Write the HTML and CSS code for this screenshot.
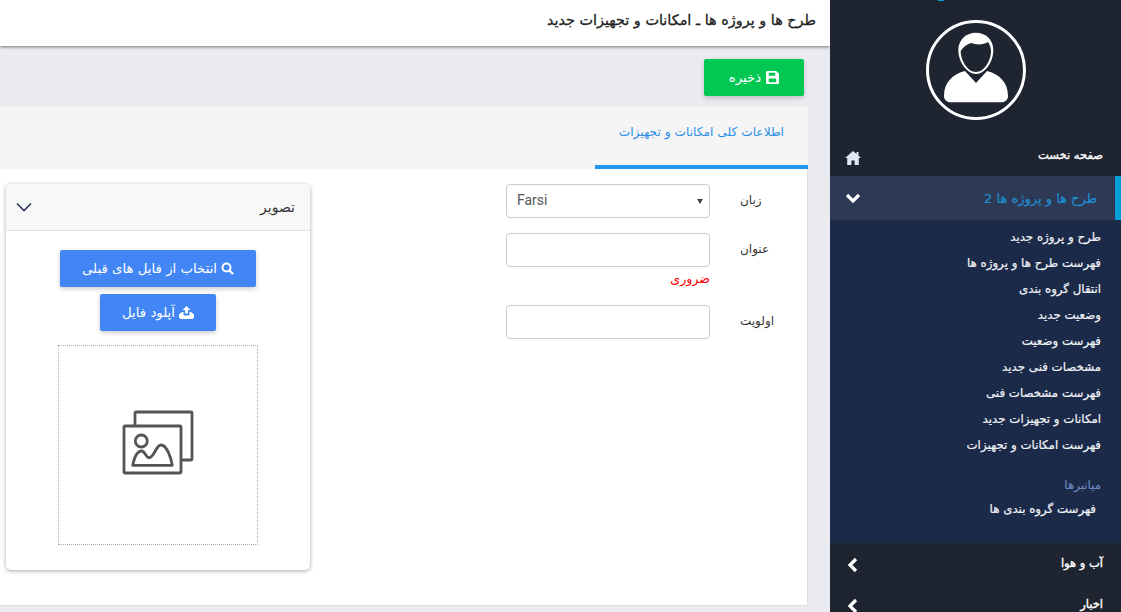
FILE: index.html
```html
<!DOCTYPE html>
<html lang="fa" dir="rtl">
<head>
    <meta charset="UTF-8">
    <meta name="viewport" content="width=device-width, initial-scale=1.0">
    <title>امکانات و تجهیزات جدید</title>
    <link rel="stylesheet" href="styles.css">
</head>
<body>
    <aside class="sidebar">
        <i class="logo-tip"></i>
        <div class="avatar">
            <svg width="104" height="104" viewBox="0 0 104 104">
                <circle cx="52" cy="52" r="48.500" fill="none" stroke="#fff" stroke-width="3"/>
                <path d="M41 53L52 65L63 53C75 56 84 64 84 78C84 82 81 84.300 77 84.300H27C23 84.300 20 82 20 78C20 64 29 56 41 53z" fill="#fff"/>
                <path d="M52 14.700C61 14.700 69.300 21 69.300 32C69.300 44 61 56 52 56C43 56 34.300 44 34.300 32C34.300 21 43 14.700 52 14.700z" fill="#fff"/>
                <path d="M36.700 33C39 29 43 26.500 47 25C52 27 60 27 64 24C66 27 67 30 67 33C67 43 60 54 52 54C44 54 36.700 43 36.700 33z" fill="#1e2430"/>
            </svg>
        </div>
        <nav class="menu">
            <a class="menu-item menu-home">
                <span>صفحه نخست</span>
                <svg class="menu-icon" width="16" height="14" viewBox="0 0 16 14"><path d="M8 0L0 7h2.200v7h4.200V9.500h3.200V14h4.200V7H16l-2.500-2.200V1h-2v2L8 0z" fill="#dfe8f5"/></svg>
            </a>
            <a class="menu-item menu-open">
                <span>طرح ها و پروژه ها 2</span>
                <svg class="menu-icon" width="16" height="12" viewBox="0 0 16 12"><path d="M2 3l6 6 6-6" fill="none" stroke="#fff" stroke-width="3.200"/></svg>
            </a>
            <div class="submenu">
                <a>طرح و پروژه جدید</a>
                <a>فهرست طرح ها و پروژه ها</a>
                <a>انتقال گروه بندی</a>
                <a>وضعیت جدید</a>
                <a>فهرست وضعیت</a>
                <a>مشخصات فنی جدید</a>
                <a>فهرست مشخصات فنی</a>
                <a>امکانات و تجهیزات جدید</a>
                <a>فهرست امکانات و تجهیزات</a>
                <div class="submenu-title">میانبرها</div>
                <a class="shortcut">فهرست گروه بندی ها</a>
            </div>
            <a class="menu-item">
                <span>آب و هوا</span>
                <svg class="menu-icon menu-arrow" width="12" height="16" viewBox="0 0 12 16"><path d="M9 2L3 8l6 6" fill="none" stroke="#fff" stroke-width="3.200"/></svg>
            </a>
            <a class="menu-item">
                <span>اخبار</span>
                <svg class="menu-icon menu-arrow" width="12" height="16" viewBox="0 0 12 16"><path d="M9 2L3 8l6 6" fill="none" stroke="#fff" stroke-width="3.200"/></svg>
            </a>
        </nav>
    </aside>

    <main class="content">
        <header class="topbar">
            <h1>طرح ها و پروژه ها ـ امکانات و تجهیزات جدید</h1>
        </header>

        <div class="toolbar">
            <button type="button" class="btn btn-save">
                <svg width="13" height="13" viewBox="0 0 14 14"><path d="M1 0h10l3 3v10a1 1 0 0 1-1 1H1a1 1 0 0 1-1-1V1a1 1 0 0 1 1-1zm2 2v3h7V2H3zm0 6v4h8V8H3z" fill="#fff" fill-rule="evenodd"/></svg>
                ذخیره
            </button>
        </div>

        <section class="panel">
            <div class="tabs">
                <a class="tab">اطلاعات کلی امکانات و تجهیزات</a>
            </div>
            <div class="panel-body">
                <form class="fields">
                    <div class="field">
                        <label>زبان</label>
                        <div class="control">
                            <div class="select">
                                <span>Farsi</span>
                                <i class="select-arrow"></i>
                            </div>
                        </div>
                    </div>
                    <div class="field">
                        <label>عنوان</label>
                        <div class="control">
                            <input type="text">
                            <div class="error">ضروری</div>
                        </div>
                    </div>
                    <div class="field">
                        <label>اولویت</label>
                        <div class="control">
                            <input type="text">
                        </div>
                    </div>
                </form>

                <div class="card">
                    <div class="card-head">
                        <span>تصویر</span>
                        <svg width="16" height="10" viewBox="0 0 16 10"><path d="M1 1.500l7 7 7-7" fill="none" stroke="#2c3a5a" stroke-width="1.600"/></svg>
                    </div>
                    <div class="card-body">
                        <button type="button" class="btn btn-blue">
                            <svg width="13" height="13" viewBox="0 0 13 13"><circle cx="5.500" cy="5.500" r="4" fill="none" stroke="#fff" stroke-width="2"/><path d="M8.500 8.500L12 12" stroke="#fff" stroke-width="2.400"/></svg>
                            انتخاب از فایل های قبلی
                        </button>
                        <button type="button" class="btn btn-blue">
                            <svg width="15" height="13" viewBox="0 0 15 13"><path d="M7.500 0L11.500 4H9v3.500H6V4H3.500z" fill="#fff"/><path d="M0 8.500L3 6h1.500v2.500a1 1 0 0 0 1 1h4a1 1 0 0 0 1-1V6H12l3 2.500V11c0 1-1 2-2 2H2c-1 0-2-1-2-2z" fill="#fff"/></svg>
                            آپلود فایل
                        </button>
                        <div class="preview">
                            <svg class="preview-icon" width="72" height="66" viewBox="0 0 72 66">
                                <g fill="none" stroke="#555" stroke-width="2.800" stroke-linejoin="round">
                                    <path d="M13 16V3a1 1 0 0 1 1-1h55a1 1 0 0 1 1 1V49a1 1 0 0 1-1 1H59"/>
                                    <rect x="2" y="16" width="57" height="47" rx="1"/>
                                    <circle cx="19.300" cy="31" r="6"/>
                                    <path d="M10.700 55.300C12 49 15 41 19.600 41C23 41 24 47.700 27.300 47.700C32 47.700 34 35 39 35C45 35 49 48 50.300 55.300z"/>
                                </g>
                            </svg>
                        </div>
                    </div>
                </div>
            </div>
        </section>
    </main>
</body>
</html>
```

FILE: styles.css
```css
html, body {
    height: 100%;
}
body {
    margin: 0;
    display: flex;
    height: 612px;
    overflow: hidden;
    font-family: "DejaVu Sans", sans-serif;
    font-size: 12px;
    color: #333;
    background-color: #e9ebf0;
}
a {
    display: block;
}

/* sidebar */
.sidebar {
    flex: 0 0 291px;
    background-color: #1e2430;
    color: white;
    position: relative;
    z-index: 2;
}
.logo-tip {
    position: absolute;
    top: 0;
    left: 108px;
    width: 6px;
    height: 1px;
    background-color: #009fd8;
}
.avatar {
    display: flex;
    justify-content: center;
    padding-top: 18px;
    height: 122px;
}
.menu-item {
    display: flex;
    justify-content: space-between;
    padding: 0 18px 0 0;
    height: 41px;
    font-size: 11.5px;
    -webkit-text-stroke: 0.35px;
}
.menu-item span {
    margin-top: 10px;
}
.menu-icon {
    margin: 11px 0 0 15px;
}
.menu-arrow {
    margin-left: 17px;
}
.menu-home {
    height: 36px;
}
.menu-home span {
    margin-top: 8px;
}
.menu-open {
    height: 44px;
    background-color: #2e3a55;
    border-right: 6px solid #009fd8;
    padding-right: 18px;
    color: #1f8fd2;
    font-size: 13px;
    -webkit-text-stroke: 0.15px;
    align-items: center;
}
.menu-open span, .menu-open .menu-icon {
    margin-top: 0;
}
.submenu {
    background-color: #1c2a4a;
    height: 323px;
    padding: 5px 20px 0 0;
    box-sizing: border-box;
    margin-bottom: 3px;
    font-size: 11.8px;
    color: #f1f3f7;
    -webkit-text-stroke: 0.2px #f1f3f7;
}
.submenu a {
    height: 26px;
    line-height: 24px;
}
.submenu-title {
    color: #6f8fc0;
    -webkit-text-stroke: 0;
    margin-top: 14px;
    height: 24px;
    line-height: 24px;
}
.submenu .shortcut {
    margin-right: 5px;
}

/* main column */
.content {
    flex: 1;
    min-width: 0;
}
.topbar {
    height: 46px;
    background-color: white;
    box-shadow: 0 1px 3px rgba(0, 0, 0, 0.5);
    padding-right: 14px;
}
.topbar h1 {
    margin: 0;
    font-size: 14.4px;
    font-weight: normal;
    -webkit-text-stroke: 0.3px;
    line-height: 40px;
    color: #222;
}
.toolbar {
    padding: 13px 26px 0 0;
    height: 48px;
}
.btn {
    display: inline-flex;
    align-items: center;
    justify-content: center;
    gap: 4px;
    border: none;
    border-radius: 2px;
    color: white;
    font-family: inherit;
    font-size: 13.3px;
    height: 37px;
    box-shadow: 0 2px 5px rgba(0, 0, 0, 0.2);
}
.btn-save {
    width: 100px;
    gap: 5px;
    background-color: #00c853;
}
.btn-blue {
    background-color: #4285f4;
    padding: 0 22px;
}

/* panel */
.panel {
    display: flex;
    flex-direction: column;
    box-sizing: border-box;
    margin-right: 22px;
    height: 499px;
    background-color: white;
    border-bottom: 1px solid #ddd;
}
.tabs {
    height: 62px;
    background-color: #f5f5f5;
}
.tab {
    width: 213px;
    height: 62px;
    box-sizing: border-box;
    border-bottom: 4px solid #2196f3;
    padding: 18px 24px 0 0;
    color: #2b8ee8;
    font-size: 12.2px;
}
.panel-body {
    flex: 1;
    display: flex;
    justify-content: space-between;
    padding: 15px 0 0 6px;
    border-right: 1px solid #ddd;
}

/* form */
.fields {
    width: 301px;
}
.field {
    display: flex;
    margin-bottom: 15px;
}
.field label {
    flex: 0 0 67px;
    text-align: left;
    padding-top: 9px;
    margin-left: 30px;
    font-size: 12px;
    box-sizing: border-box;
}
.control {
    width: 204px;
}
input, .select {
    display: block;
    box-sizing: border-box;
    width: 204px;
    height: 34px;
    border: 1px solid #ccc;
    border-radius: 4px;
    background-color: white;
}
.select {
    direction: ltr;
    display: flex;
    align-items: center;
    justify-content: space-between;
    padding: 0 6px 2px 10px;
    font-family: Roboto, sans-serif;
    font-size: 14px;
    color: #555;
}
.select-arrow {
    border: 3px solid transparent;
    border-top: 5px solid #444;
    border-bottom: 0;
    margin-top: 2px;
}
.error {
    color: #f00;
    font-size: 12.6px;
    height: 23px;
    line-height: 24px;
}

/* image card */
.card {
    width: 304px;
    height: 386px;
    border-radius: 5px;
    background-color: white;
    box-shadow: 0 1px 4px rgba(0, 0, 0, 0.35);
    overflow: hidden;
}
.card-head {
    display: flex;
    justify-content: space-between;
    align-items: center;
    height: 46px;
    padding: 0 15px 0 10px;
    background-color: #f8f8f8;
    border-bottom: 1px solid #ddd;
    font-size: 14px;
    color: #333;
}
.card-body {
    display: flex;
    flex-direction: column;
    align-items: center;
    padding-top: 19px;
}
.card-body .btn {
    margin-bottom: 7px;
}
.preview {
    width: 200px;
    height: 200px;
    box-sizing: border-box;
    margin-top: 7px;
    border: 1px dotted #aaa;
    display: flex;
    align-items: center;
    justify-content: center;
}
.preview-icon {
    margin-bottom: 4px;
}
```
